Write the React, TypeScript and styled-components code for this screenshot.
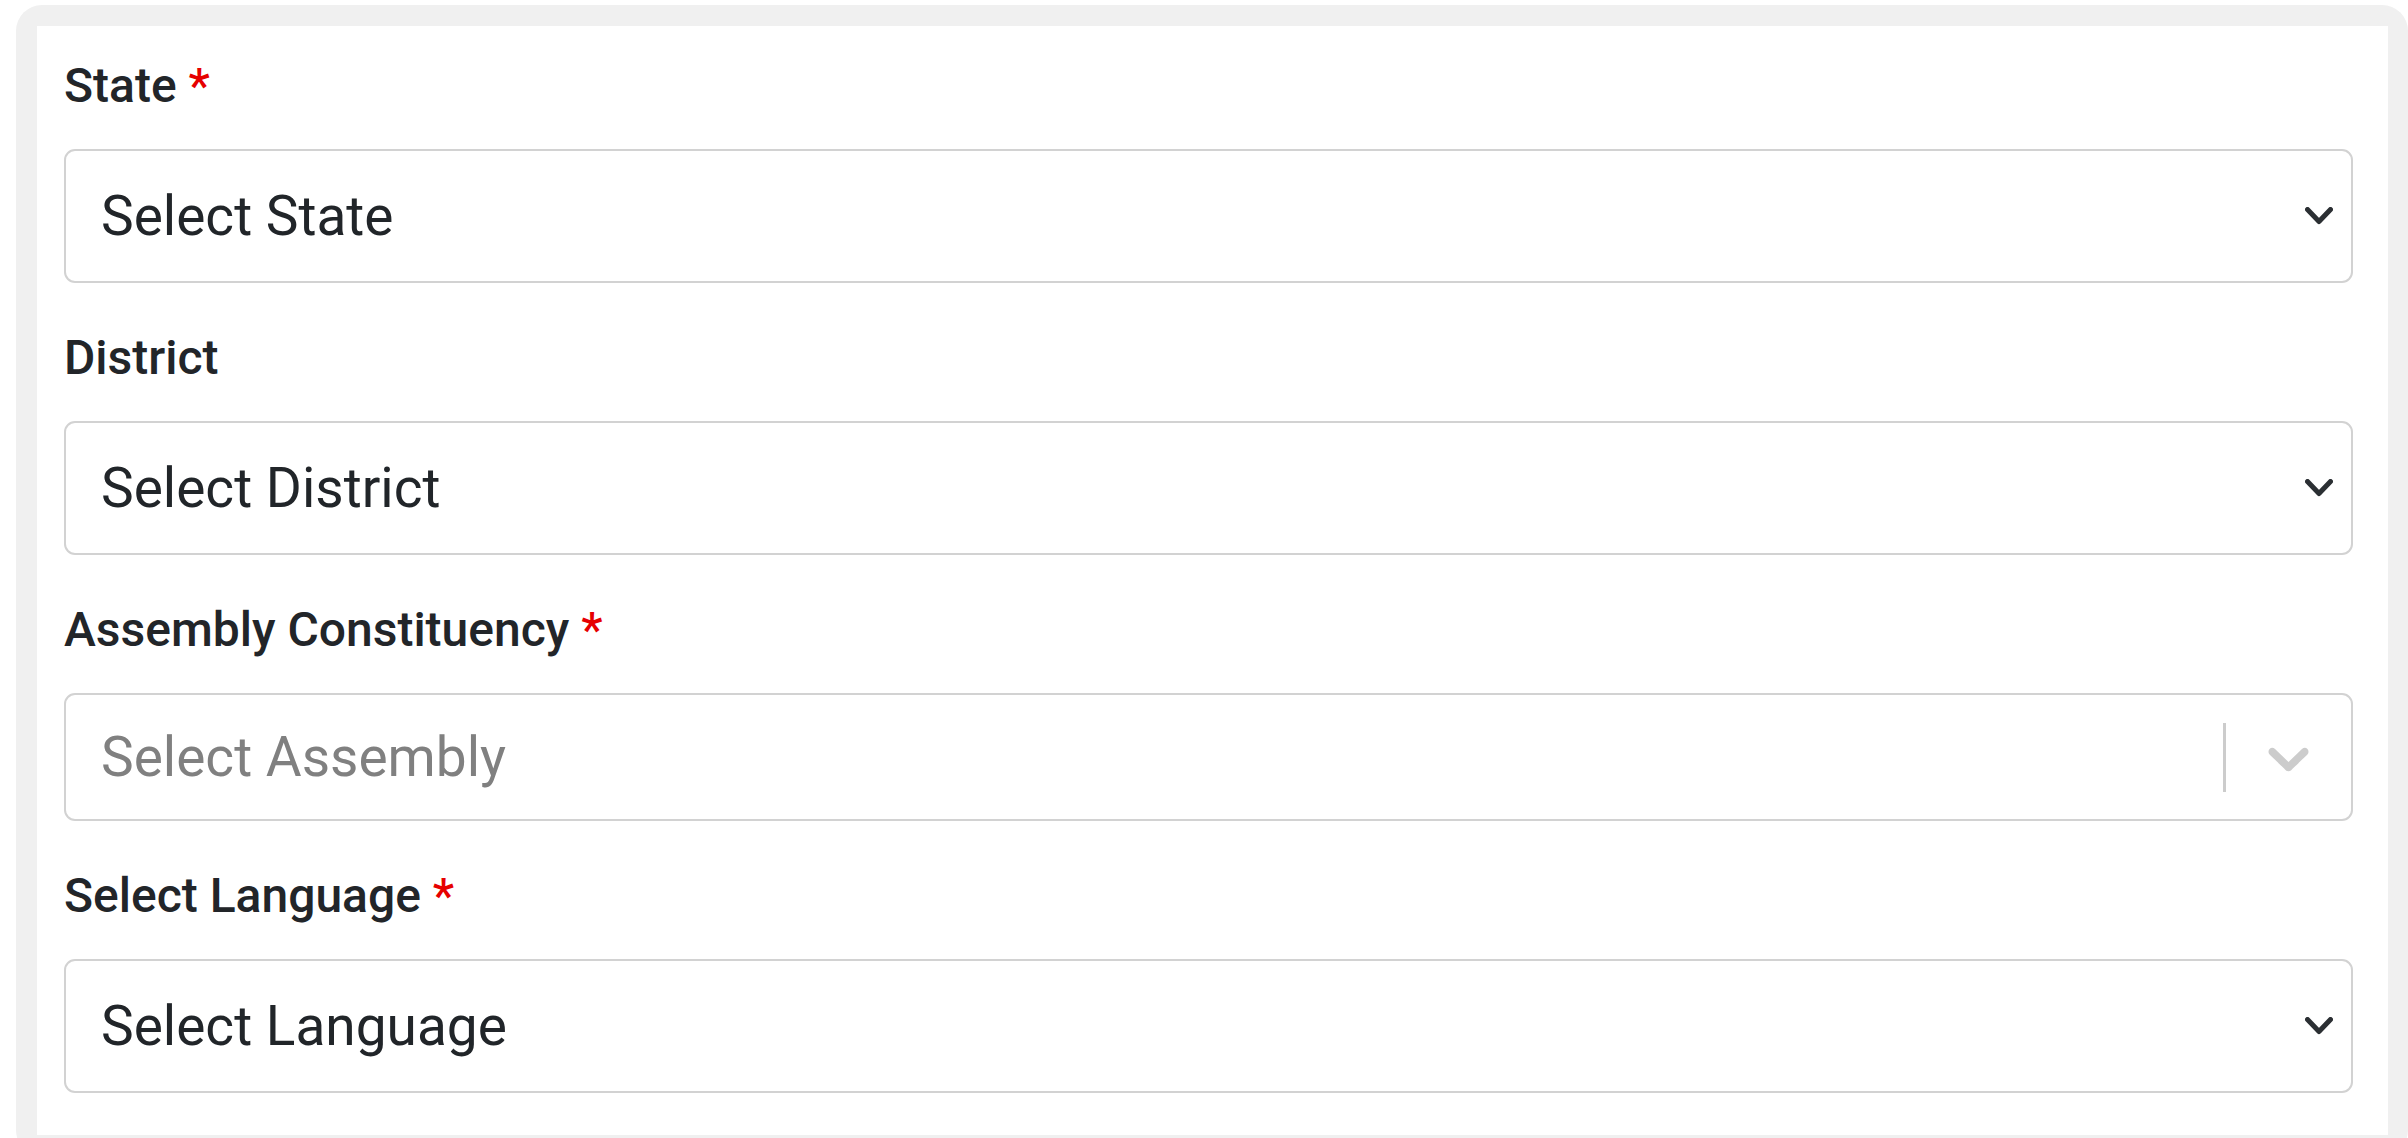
import React from "react";
import styled, { createGlobalStyle } from "styled-components";

const GlobalStyle = createGlobalStyle`
  body {
    margin: 0;
    background: #ffffff;
    font-family: Roboto, "Liberation Sans", sans-serif;
  }
`;

interface FieldProps {
  label: string;
  required?: boolean;
  placeholder: string;
  variant: "native" | "react";
}

const Field: React.FC<FieldProps> = ({ label, required, placeholder, variant }) => {
  return (
    <Group>
      <Label>
        {label}
        {required && <Required> *</Required>}
      </Label>
      {variant === "native" ? (
        <SelectBox muted={false} boxHeight={134}>
          <span className="value">{placeholder}</span>
          <NativeChevron width="28" height="18" viewBox="0 0 28 18">
            <polyline points="2.5,2.5 14,14.5 25.5,2.5" />
          </NativeChevron>
        </SelectBox>
      ) : (
        <SelectBox muted={true} boxHeight={128}>
          <span className="value">{placeholder}</span>
          <Indicators>
            <Separator />
            <IndicatorWrap>
              <svg width="69" height="69" viewBox="0 0 20 20" fill="#cccccc">
                <path d="M4.516 7.548c0.436-0.446 1.043-0.481 1.576 0l3.908 3.747 3.908-3.747c0.533-0.481 1.141-0.446 1.574 0 0.436 0.445 0.408 1.197 0 1.615-0.406 0.418-4.695 4.502-4.695 4.502-0.217 0.223-0.502 0.335-0.787 0.335s-0.57-0.112-0.789-0.335c0 0-4.287-4.084-4.695-4.502s-0.436-1.17 0-1.615z" />
              </svg>
            </IndicatorWrap>
          </Indicators>
        </SelectBox>
      )}
    </Group>
  );
};

const App = () => {
  return (
    <>
      <GlobalStyle />
      <Page>
        <Card>
          <Panel>
            <Field label="State" required placeholder="Select State" variant="native" />
            <Field label="District" placeholder="Select District" variant="native" />
            <Field
              label="Assembly Constituency"
              required
              placeholder="Select Assembly"
              variant="react"
            />
            <Field label="Select Language" required placeholder="Select Language" variant="native" />
          </Panel>
        </Card>
      </Page>
    </>
  );
};

const Page = styled.div`
  padding: 5px 0 0 16px;
  height: 1138px;
  box-sizing: border-box;
  overflow: hidden;
`;

const Card = styled.div`
  background-color: #f0f0f0;
  border-radius: 26px;
  padding: 21px 20px 21px 21px;
`;

const Panel = styled.div`
  background-color: #ffffff;
  padding: 25px 35px 42px 27px;
  display: flex;
  flex-direction: column;
  gap: 40px;
`;

const Group = styled.div`
  display: flex;
  flex-direction: column;
`;

const Label = styled.label`
  font-size: 48px;
  line-height: 70px;
  font-weight: 500;
  color: #222529;
  margin-bottom: 28px;
`;

const Required = styled.span`
  color: #e60000;
`;

const SelectBox = styled.div<{ muted: boolean; boxHeight: number }>`
  height: ${(props) => props.boxHeight}px;
  box-sizing: border-box;
  border: 2px solid #d2d2d2;
  border-radius: 11px;
  display: flex;
  align-items: center;
  padding-left: 35px;
  padding-right: ${(props) => (props.muted ? "28px" : "18px")};
  font-size: 55px;
  color: ${(props) => (props.muted ? "#808080" : "#212529")};
  > .value {
    flex: 1;
  }
`;

const NativeChevron = styled.svg`
  fill: none;
  stroke: #2b2f33;
  stroke-width: 5;
  stroke-linecap: round;
  stroke-linejoin: round;
`;

const Indicators = styled.div`
  display: flex;
  align-items: center;
  align-self: stretch;
`;

const Separator = styled.span`
  width: 3px;
  height: 69px;
  align-self: center;
  background-color: #cccccc;
`;

const IndicatorWrap = styled.div`
  display: flex;
  align-items: center;
  padding-left: 28px;
`;

export default App;
